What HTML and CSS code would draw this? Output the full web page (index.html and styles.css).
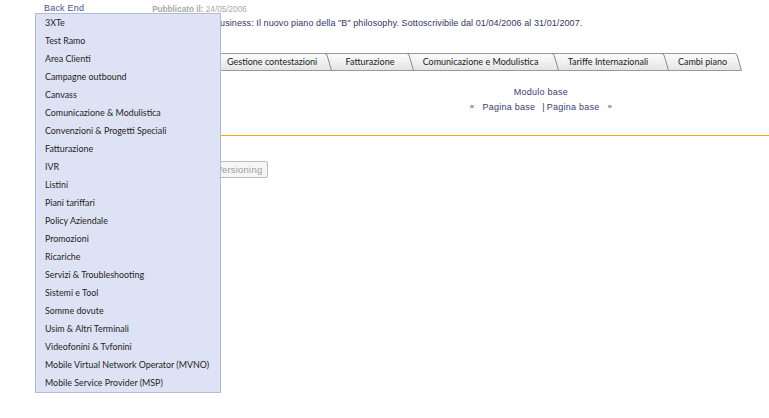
FILE: index.html
```html
<!DOCTYPE html>
<html lang="it">
<head>
<meta charset="utf-8">
<title>Back End</title>
<link rel="stylesheet" href="styles.css">
</head>
<body>
<div class="page">
  <div class="topbar">
    <a class="nav-link" href="#">Back End</a>
    <span class="published"><b>Pubblicato il:</b> 24/05/2006</span>
  </div>
  <div class="content">
    <p class="summary">Business: Il nuovo piano della "B" philosophy. Sottoscrivibile dal 01/04/2006 al 31/01/2007.</p>
    <div class="tabs">
      <div class="tab"><span class="tab-label t1">Gestione contestazioni</span><svg class="sep" width="10" height="18" viewBox="0 0 10 18"><path d="M0 0.5H10M0 17.5H10" stroke="#9a9a9a" fill="none"/><path d="M0.5 0.5Q2.5 0.5 3.2 2.5L7.5 17.5" stroke="#8a8a8a" fill="none"/></svg></div>
      <div class="tab"><span class="tab-label t2">Fatturazione</span><svg class="sep" width="10" height="18" viewBox="0 0 10 18"><path d="M0 0.5H10M0 17.5H10" stroke="#9a9a9a" fill="none"/><path d="M0.5 0.5Q2.5 0.5 3.2 2.5L7.5 17.5" stroke="#8a8a8a" fill="none"/></svg></div>
      <div class="tab"><span class="tab-label t3">Comunicazione e Modulistica</span><svg class="sep" width="10" height="18" viewBox="0 0 10 18"><path d="M0 0.5H10M0 17.5H10" stroke="#9a9a9a" fill="none"/><path d="M0.5 0.5Q2.5 0.5 3.2 2.5L7.5 17.5" stroke="#8a8a8a" fill="none"/></svg></div>
      <div class="tab"><span class="tab-label t4">Tariffe Internazionali</span><svg class="sep" width="10" height="18" viewBox="0 0 10 18"><path d="M0 0.5H10M0 17.5H10" stroke="#9a9a9a" fill="none"/><path d="M0.5 0.5Q2.5 0.5 3.2 2.5L7.5 17.5" stroke="#8a8a8a" fill="none"/></svg></div>
      <div class="tab"><span class="tab-label t5">Cambi piano</span><svg class="sep" width="10" height="18" viewBox="0 0 10 18"><path d="M0 0.5H0.5Q2.5 0.5 3.2 2.5L7.5 18H10V0Z" fill="#ffffff"/><path d="M0 17.5H7.5" stroke="#9a9a9a" fill="none"/><path d="M0 0.5H0.5Q2.5 0.5 3.2 2.5L7.5 17.5" stroke="#8a8a8a" fill="none"/></svg></div>
    </div>
    <div class="module">
      <div class="module-title">Modulo base</div>
      <div class="pager"><span class="arrow">«</span><a href="#">Pagina base</a><span class="bar">|</span><a href="#">Pagina base</a><span class="arrow">»</span></div>
    </div>
    <div class="rule"></div>
    <button class="btn" disabled>Versioning</button>
  </div>
  <ul class="dropdown">
    <li>3XTe</li>
    <li>Test Ramo</li>
    <li>Area Clienti</li>
    <li>Campagne outbound</li>
    <li>Canvass</li>
    <li>Comunicazione &amp; Modulistica</li>
    <li>Convenzioni &amp; Progetti Speciali</li>
    <li>Fatturazione</li>
    <li>IVR</li>
    <li>Listini</li>
    <li>Piani tariffari</li>
    <li>Policy Aziendale</li>
    <li>Promozioni</li>
    <li>Ricariche</li>
    <li>Servizi &amp; Troubleshooting</li>
    <li>Sistemi e Tool</li>
    <li>Somme dovute</li>
    <li>Usim &amp; Altri Terminali</li>
    <li>Videofonini &amp; Tvfonini</li>
    <li>Mobile Virtual Network Operator (MVNO)</li>
    <li>Mobile Service Provider (MSP)</li>
  </ul>
</div>
</body>
</html>
```

FILE: styles.css
```css
html, body {
  margin: 0;
  padding: 0;
  background: #ffffff;
}
body {
  font-family: "Liberation Sans", Arial, sans-serif;
  font-size: 9px;
  color: #3b3b6b;
}
.page {
  position: relative;
  width: 769px;
  height: 418px;
  overflow: hidden;
}
.topbar {
  display: flex;
  align-items: flex-start;
  height: 17px;
}
.nav-link {
  margin-left: 44px;
  padding-top: 3px;
  color: #46528c;
  text-decoration: none;
  font-size: 9px;
  letter-spacing: 0.2px;
}
.published {
  margin-left: 68px;
  padding-top: 5px;
  color: #a8a8a8;
  font-size: 8.2px;
}
.published b {
  font-weight: bold;
}
.content {
  margin-left: 200px;
}
.summary {
  margin: 1px 0 0 0;
  padding-left: 14px;
  height: 11px;
  line-height: 11px;
  font-size: 9px;
  letter-spacing: 0.08px;
  color: #34346a;
}
.tabs {
  display: flex;
  margin-top: 24px;
  height: 18px;
}
.tab {
  display: flex;
}
.tab-label {
  display: block;
  height: 16px;
  line-height: 16px;
  text-align: center;
  border-top: 1px solid #9a9a9a;
  border-bottom: 1px solid #9a9a9a;
  background: linear-gradient(#fcfcfc, #e4e4e4);
  font-family: Lato, "Liberation Sans", sans-serif;
  font-size: 9px;
  color: #222222;
  white-space: nowrap;
}
.tab-label.t1 {
  width: 97px;
  padding-left: 27px;
  text-align: left;
}
.tab-label.t2 {
  width: 72px;
}
.tab-label.t3 {
  width: 129px;
  padding-right: 6px;
}
.tab-label.t4 {
  width: 94px;
  padding-right: 6px;
}
.tab-label.t5 {
  width: 63px;
}
.sep {
  display: block;
  background: linear-gradient(#fcfcfc, #e4e4e4);
}
.module {
  margin-left: 113px;
  width: 456px;
  margin-top: 14px;
  text-align: center;
  color: #3b3b78;
  font-size: 9px;
  letter-spacing: 0.25px;
}
.module-title {
  height: 14px;
  line-height: 14px;
}
.pager {
  display: flex;
  justify-content: center;
  align-items: center;
  height: 15px;
}
.pager a {
  color: #3b3b78;
  text-decoration: none;
}
.pager .arrow {
  font-size: 8px;
  margin: 0 8px;
}
.pager .bar {
  margin: 0 2px 0 7px;
}
.rule {
  margin-top: 21px;
  height: 0;
  border-top: 1px solid #f4a11a;
}
.btn {
  display: block;
  margin: 25px 0 0 10px;
  height: 17px;
  padding: 0 5px;
  border: 1px solid #bcbcbc;
  border-radius: 2px;
  background: #f6f6f6;
  color: #9c9c9c;
  font-family: "Liberation Sans", Arial, sans-serif;
  font-size: 9.5px;
  letter-spacing: 0.2px;
}
.dropdown {
  position: absolute;
  left: 35px;
  top: 13px;
  width: 184px;
  margin: 0;
  padding: 0;
  list-style: none;
  background: #dde3f4;
  border: 1px solid #b3bbd3;
}
.dropdown li {
  height: 18px;
  line-height: 18px;
  padding-left: 9px;
  font-family: Lato, "Liberation Sans", sans-serif;
  font-size: 8.9px;
  color: #1e1e1e;
  white-space: nowrap;
}
```
